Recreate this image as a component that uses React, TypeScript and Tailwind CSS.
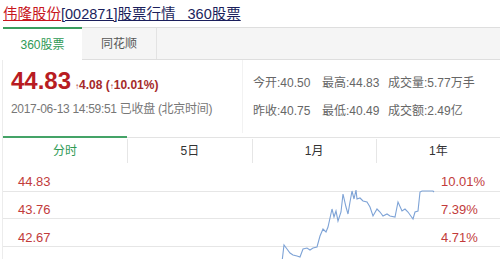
import React from "react";

const pts: [number, number][] = [
  [279, 102], [279, 98], [281, 81], [284, 85], [287, 89], [290, 91], [294, 92], [297, 93],
  [300, 85], [304, 84], [307, 86], [310, 84], [314, 83], [317, 72], [320, 65], [323, 68],
  [325, 63], [329, 45], [331, 53], [333, 47], [335, 57], [338, 48], [340, 30], [343, 43],
  [345, 50], [347, 38], [349, 27], [351, 35], [353, 26], [354, 35], [357, 34], [360, 37],
  [364, 38], [367, 43], [370, 52], [374, 45], [377, 48], [380, 52], [384, 50], [387, 52],
  [392, 53], [395, 38], [399, 47], [402, 45], [405, 48], [410, 55], [412, 48], [415, 47],
  [417, 28], [419, 27], [430, 27], [431, 28],
];

export default function App() {
  const leftLabels = ["44.83", "43.76", "42.67", "41.58"];
  const rightLabels = ["10.01%", "7.39%", "4.71%", "2.03%"];
  return (
    <div className="w-[500px] h-[259px] overflow-hidden bg-white font-['Liberation_Sans','Noto_Sans_CJK_SC',sans-serif]">
      {/* title */}
      <div className="h-[27px] pl-[3px] pt-[5px] text-[14.5px] leading-[18px] whitespace-nowrap">
        <span className="text-[#c8161d] underline decoration-[#c8161d]">伟隆股份</span>
        <span className="text-[#1b1f5c] underline decoration-[#1b1f5c]">
          [002871]股票行情&nbsp;&nbsp;&nbsp;360股票
        </span>
      </div>

      {/* source tabs */}
      <div className="ml-[3px] flex h-[33px] border-t border-b border-[#dedede] bg-[#f5f5f5] text-[12px]">
        <div className="-mt-px flex h-[33px] w-[79px] items-center justify-center border-t-2 border-[#3a9d5d] bg-white text-[#2f9a55]">
          360股票
        </div>
        <div className="flex w-[75px] items-center justify-center border-r border-[#e3e3e3] text-[#555]">
          同花顺
        </div>
      </div>

      {/* quote */}
      <div className="ml-[2px] flex h-[73px] border-l border-[#ececec]">
        <div className="w-[240px] border-r border-[#f2f2f2] pl-[8px] pt-[7px]">
          <div className="flex items-baseline whitespace-nowrap">
            <span className="text-[24px] leading-[28px] font-bold text-[#b81c22]">44.83</span>
            <span className="ml-[4px] text-[12px] font-bold text-[#a52a2a]">
              <span className="text-[8px]">↑</span>4.08 (<span className="text-[8px]">↑</span>10.01%)
            </span>
          </div>
          <div className="mt-[6px] text-[12px] leading-[16px] tracking-[-0.3px] text-[#777] whitespace-nowrap">
            2017-06-13 14:59:51 已收盘 (北京时间)
          </div>
        </div>
        <div className="pl-[10px] pt-[15px] text-[12px] leading-[16px] text-[#666] whitespace-nowrap">
          <div className="flex">
            <span className="w-[69px]">今开:40.50</span>
            <span className="w-[66px]">最高:44.83</span>
            <span>成交量:5.77万手</span>
          </div>
          <div className="mt-[12px] flex">
            <span className="w-[69px]">昨收:40.75</span>
            <span className="w-[66px]">最低:40.49</span>
            <span>成交额:2.49亿</span>
          </div>
        </div>
      </div>

      {/* chart tabs */}
      <div className="ml-[2px] border-l border-[#ececec] pt-[4px]">
        <div className="grid h-[27px] grid-cols-4 border-t border-[#e3e3e3] text-[12px] text-[#333]">
          <div className="-mt-[2px] flex items-center justify-center border-t-2 border-[#44a367] text-[#2f9a55]">分时</div>
          <div className="my-[1px] flex items-center justify-center border-l border-[#e6e6e6]">5日</div>
          <div className="my-[1px] flex items-center justify-center border-l border-[#e6e6e6]">1月</div>
          <div className="my-[1px] flex items-center justify-center border-l border-[#e6e6e6]">1年</div>
        </div>

        {/* chart */}
        <div className="relative h-[99px]">
          <svg className="absolute inset-0" width="497" height="99" viewBox="0 0 497 99">
            <line x1="0" y1="27.5" x2="497" y2="27.5" stroke="#e6e6e6" strokeWidth="1" />
            <line x1="0" y1="54.5" x2="497" y2="54.5" stroke="#e6e6e6" strokeWidth="1" />
            <line x1="0" y1="82.5" x2="497" y2="82.5" stroke="#e6e6e6" strokeWidth="1" />
            <polyline
              points={pts.map((p) => p.join(",")).join(" ")}
              fill="none"
              stroke="#7ea3d6"
              strokeWidth="1.1"
            />
          </svg>
          <div className="relative flex justify-between text-[13px] leading-[16px] text-[#c23b3b]">
            <div className="pl-[15px]">
              {leftLabels.map((l) => (
                <div key={l} className="h-[28px] pt-[10px]">{l}</div>
              ))}
            </div>
            <div className="w-[59px]">
              {rightLabels.map((l) => (
                <div key={l} className="h-[28px] pt-[10px]">{l}</div>
              ))}
            </div>
          </div>
        </div>
      </div>
    </div>
  );
}
